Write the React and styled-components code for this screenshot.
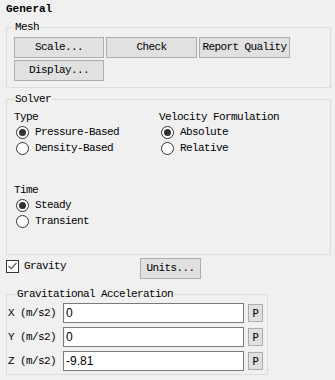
import React from "react";
import styled, { createGlobalStyle } from "styled-components";

const GlobalStyle = createGlobalStyle`
  html, body {
    margin: 0;
    padding: 0;
    background: #f0f0f0;
  }
  body {
    font-family: "Liberation Mono", "Noto Sans CJK SC", monospace;
    font-size: 11px;
    letter-spacing: -0.6px;
    color: #000;
  }
`;

const Panel = styled.div`
  width: 335px;
  height: 380px;
  box-sizing: border-box;
  padding-top: 2px;
  background: #f0f0f0;
`;

const Title = styled.div`
  font-weight: bold;
  line-height: 14px;
  padding-left: 6px;
  letter-spacing: 0;
`;

const Group = styled.fieldset`
  margin: ${(p) => p.$top || 0}px 0 0 6px;
  width: ${(p) => p.$width}px;
  box-sizing: border-box;
  border: 1px solid #dcdcdc;
  padding: ${(p) => p.$pad || "4px 7px 6px 7px"};
  min-width: 0;
`;

const Legend = styled.legend`
  padding: 0 1px;
  margin-left: ${(p) => p.$offset || 0}px;
  line-height: 12px;
`;

const ButtonGrid = styled.div`
  display: grid;
  grid-template-columns: 90px 91px 91px;
  column-gap: 2px;
  row-gap: 2px;
`;

const Button = styled.button`
  font: inherit;
  letter-spacing: inherit;
  color: #000;
  height: ${(p) => p.$h || 21}px;
  width: ${(p) => (p.$w ? `${p.$w}px` : "auto")};
  padding: 0;
  margin: 0;
  background: #e1e1e1;
  border: 1px solid #adadad;
  border-radius: 0;
  text-align: center;
  line-height: 1;
`;

const SolverGrid = styled.div`
  display: grid;
  grid-template-columns: 145px auto;
`;

const Column = styled.div`
  display: flex;
  flex-direction: column;
  gap: ${(p) => p.$gap || 0}px;
`;

const Caption = styled.div`
  line-height: 12px;
  margin-top: ${(p) => p.$top || 0}px;
  margin-bottom: 1px;
`;

const RadioRow = styled.label`
  display: flex;
  align-items: center;
  height: 16px;
  padding-left: 2px;
  gap: 6px;
`;

const RadioCircle = styled.span`
  width: 11px;
  height: 11px;
  border-radius: 50%;
  border: 1px solid #333;
  background: #fff;
  display: flex;
  align-items: center;
  justify-content: center;
  flex: none;

  &::after {
    content: "";
    width: 7px;
    height: 7px;
    border-radius: 50%;
    background: ${(p) => (p.$on ? "#333" : "transparent")};
  }
`;

const GravityRow = styled.div`
  display: grid;
  grid-template-columns: 134px auto;
  align-items: center;
  padding-left: 6px;
  margin-top: 3px;
`;

const CheckLabel = styled.label`
  display: flex;
  align-items: center;
  gap: 5px;
  margin-top: -5px;
`;

const CheckBox = styled.span`
  width: 11px;
  height: 11px;
  border: 1px solid #333;
  background: #fff;
  display: flex;
  align-items: center;
  justify-content: center;
`;

const FieldRow = styled.div`
  display: flex;
  align-items: center;
  height: 20px;
`;

const FieldLabel = styled.span`
  width: 55px;
  line-height: 12px;
`;

const Input = styled.input`
  width: 181px;
  height: 20px;
  box-sizing: border-box;
  border: 1px solid #7a7a7a;
  background: #fff;
  margin: 0;
  padding: 0 2px;
  font-family: "Liberation Sans", Arial, sans-serif;
  font-size: 12px;
  letter-spacing: 0;
  color: #000;
  outline: none;
`;

const PButton = styled(Button)`
  margin-left: 4px;
  width: 15px;
  height: 18px;
  font-family: "DejaVu Sans Mono", monospace;
  font-size: 11px;
  letter-spacing: 0;
`;

const Radio = ({ on, children }) => (
  <RadioRow>
    <RadioCircle $on={on} />
    {children}
  </RadioRow>
);

const Field = ({ label, value }) => (
  <FieldRow>
    <FieldLabel>{label}</FieldLabel>
    <Input defaultValue={value} />
    <PButton>P</PButton>
  </FieldRow>
);

export default function App() {
  return (
    <>
      <GlobalStyle />
      <Panel>
        <Title>General</Title>
        <Group $top={5} $width={325}>
          <Legend>Mesh</Legend>
          <ButtonGrid>
            <Button>Scale...</Button>
            <Button>Check</Button>
            <Button>Report Quality</Button>
            <Button>Display...</Button>
          </ButtonGrid>
        </Group>
        <Group $top={5} $width={325} $pad="6px 7px 25px 7px">
          <Legend>Solver</Legend>
          <SolverGrid>
            <Column>
              <Caption>Type</Caption>
              <Radio on>Pressure-Based</Radio>
              <Radio>Density-Based</Radio>
              <Caption $top={28}>Time</Caption>
              <Radio on>Steady</Radio>
              <Radio>Transient</Radio>
            </Column>
            <Column>
              <Caption>Velocity Formulation</Caption>
              <Radio on>Absolute</Radio>
              <Radio>Relative</Radio>
            </Column>
          </SolverGrid>
        </Group>
        <GravityRow>
          <CheckLabel>
            <CheckBox>
              <svg width="9" height="8" viewBox="0 0 9 8">
                <path d="M0.5 4 L3.2 6.7 L8.5 0.8" fill="none" stroke="#555" strokeWidth="1.2" />
              </svg>
            </CheckBox>
            Gravity
          </CheckLabel>
          <Button $w={61}>Units...</Button>
        </GravityRow>
        <Group $top={9} $width={262} $pad="3px 1px 3px 1px">
          <Legend $offset={8}>Gravitational Acceleration</Legend>
          <Column $gap={4}>
            <Field label="X (m/s2)" value="0" />
            <Field label="Y (m/s2)" value="0" />
            <Field label="Z (m/s2)" value="-9.81" />
          </Column>
        </Group>
      </Panel>
    </>
  );
}
